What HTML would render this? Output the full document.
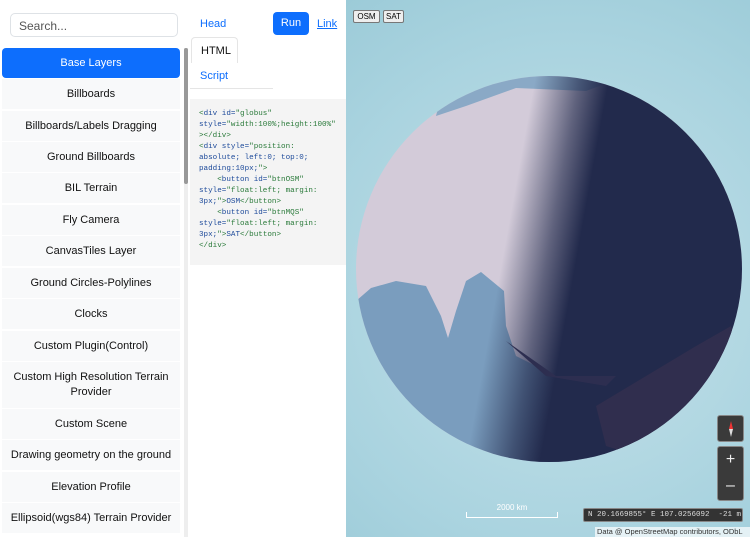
<!DOCTYPE html>
<html><head><meta charset="utf-8"><style>
*{box-sizing:border-box;margin:0;padding:0}
body{width:750px;height:537px;overflow:hidden;font-family:"Liberation Sans","DejaVu Sans",sans-serif;background:#fff;position:relative}
#left{position:absolute;left:0;top:0;width:188px;height:537px;background:#fff}
#search{position:absolute;left:10px;top:13px;width:168px;height:24px;border:1px solid #dee2e6;border-radius:5px;font-size:12px;color:#555;padding:5px 8px}
.item{position:absolute;left:2px;width:178px;height:30px;background:#f8f9fa;font-size:11px;color:#111;text-align:center;display:flex;align-items:center;justify-content:center;line-height:15px;padding:0 6px}
.item.act{background:#0d6efd;color:#fff;border-radius:4px}
#sb{position:absolute;left:184px;top:48px;width:4px;height:489px;background:#eee}
#sbt{position:absolute;left:184px;top:48px;width:4px;height:136px;background:#999;border-radius:2px}
#mid{position:absolute;left:190px;top:0;width:156px;height:537px;background:#fff}
a{color:#0d6efd;font-size:11px}
#code{position:absolute;left:190px;top:99px;width:156px;height:166px;background:#f4f4f4;font-family:"Liberation Mono",monospace;font-size:7.6px;line-height:11px;padding:10px 0 0 9px;color:#1d4a9a;white-space:pre}
.g{color:#2a7a3a}
#map{position:absolute;left:346px;top:0;width:404px;height:537px;background:radial-gradient(circle at 55% 55%,#c6e2ea,#a9d3df 70%,#9ccbd8)}
.btn{position:absolute;background:#3a3a3a;border:1px solid #888;border-radius:3px}
</style></head><body>
<div id="left">
<div id="search">Search...</div>
<div class="item act" style="top:48px">Base Layers</div>
<div class="item" style="top:79px">Billboards</div>
<div class="item" style="top:111px">Billboards/Labels Dragging</div>
<div class="item" style="top:142px">Ground Billboards</div>
<div class="item" style="top:173px">BIL Terrain</div>
<div class="item" style="top:205px">Fly Camera</div>
<div class="item" style="top:236px">CanvasTiles Layer</div>
<div class="item" style="top:268px">Ground Circles-Polylines</div>
<div class="item" style="top:299px">Clocks</div>
<div class="item" style="top:331px">Custom Plugin(Control)</div>
<div class="item" style="top:362px;height:46px">Custom High Resolution Terrain Provider</div>
<div class="item" style="top:409px">Custom Scene</div>
<div class="item" style="top:440px">Drawing geometry on the ground</div>
<div class="item" style="top:472px">Elevation Profile</div>
<div class="item" style="top:503px">Ellipsoid(wgs84) Terrain Provider</div>
</div>
<div id="sb"></div><div id="sbt"></div>
<div id="mid">
<a style="position:absolute;left:10px;top:18px;text-decoration:none">Head</a>
<div style="position:absolute;left:83px;top:12px;width:36px;height:23px;background:#0d6efd;border-radius:4px;color:#fff;font-size:11px;text-align:center;line-height:23px">Run</div>
<a style="position:absolute;left:127px;top:18px;text-decoration:underline">Link</a>
<div style="position:absolute;left:1px;top:37px;width:47px;height:26px;border:1px solid #e5e5e5;border-bottom:none;border-radius:4px 4px 0 0;font-size:11px;color:#111;padding:7px 0 0 9px">HTML</div>
<a style="position:absolute;left:10px;top:70px;text-decoration:none">Script</a>
<div style="position:absolute;left:0;top:88px;width:83px;height:1px;background:#e5e5e5"></div>
</div>
<div id="code"><span class="g">&lt;</span>div id=<span class="g">"globus"</span>
style=<span class="g">"width:100%;height:100%"</span>
<span class="g">&gt;&lt;/div&gt;</span>
<span class="g">&lt;</span>div style=<span class="g">"position:</span>
absolute; left:0; top:0;
padding:10px;<span class="g">"&gt;</span>
    <span class="g">&lt;</span>button id=<span class="g">"btnOSM"</span>
style=<span class="g">"float:left; margin:</span>
3px;<span class="g">"&gt;</span>OSM<span class="g">&lt;/button&gt;</span>
    <span class="g">&lt;</span>button id=<span class="g">"btnMQS"</span>
style=<span class="g">"float:left; margin:</span>
3px;<span class="g">"&gt;</span>SAT<span class="g">&lt;/button&gt;</span>
<span class="g">&lt;/div&gt;</span></div>
<div id="map">
<div style="position:absolute;left:7px;top:10px;width:27px;height:13px;background:#eee;border:1px solid #777;border-radius:2px;font-size:8px;text-align:center;line-height:11px">OSM</div>
<div style="position:absolute;left:37px;top:10px;width:21px;height:13px;background:#eee;border:1px solid #777;border-radius:2px;font-size:8px;text-align:center;line-height:11px">SAT</div>
<svg style="position:absolute;left:10px;top:76px" width="386" height="386" viewBox="0 0 386 386">
<defs>
<clipPath id="c"><circle cx="193" cy="193" r="193"/></clipPath>
<linearGradient id="t" gradientUnits="userSpaceOnUse" x1="146" y1="185" x2="218" y2="198">
<stop offset="0" stop-color="#222a4c" stop-opacity="0"/>
<stop offset="0.6" stop-color="#222a4c" stop-opacity="0.65"/>
<stop offset="1" stop-color="#222a4c" stop-opacity="1"/>
</linearGradient>
</defs>
<g clip-path="url(#c)">
<rect width="386" height="386" fill="#d3cbd9"/>
<path d="M0 225 L15 212 L40 205 L70 210 L85 240 L92 262 L100 235 L110 205 L125 196 L148 215 L150 250 L160 280 L200 300 L230 330 L260 386 L0 386 Z" fill="#7a9dbe"/>
<path d="M90 0 L270 0 L230 15 L160 12 L110 30 L80 40 Z" fill="#8aa9c6"/>
<rect width="386" height="386" fill="url(#t)"/>
<path d="M240 330 L290 300 L340 270 L375 250 L386 300 L360 360 L300 386 L250 370 Z" fill="#302e4e"/>
<path d="M150 265 L200 300 L260 300 L250 310 L190 300 Z" fill="#2d2e50"/>
</g>
</svg>
<div style="position:absolute;left:120px;top:512px;width:92px;height:6px;border:1px solid #fff;border-top:none"></div>
<div style="position:absolute;left:120px;top:503px;width:92px;text-align:center;font-size:8px;color:#fff">2000 km</div>
<div class="btn" style="left:371px;top:415px;width:27px;height:27px"><div style="position:absolute;left:11px;top:5px;width:0;height:0;border-left:2.5px solid transparent;border-right:2.5px solid transparent;border-bottom:8px solid #e33"></div><div style="position:absolute;left:11px;top:13px;width:0;height:0;border-left:2.5px solid transparent;border-right:2.5px solid transparent;border-top:8px solid #ddd"></div></div>
<div class="btn" style="left:371px;top:446px;width:27px;height:55px;color:#eee;font-size:16px;text-align:center;line-height:26px">+<br>–</div>
<div style="position:absolute;left:237px;top:508px;width:160px;height:14px;background:#333;border:1px solid #888;border-radius:2px;font-family:'Liberation Mono',monospace;font-size:7.5px;color:#ddd;line-height:12px;padding-left:4px;white-space:pre;overflow:hidden">N 20.1669855° E 107.0256092  -21 m</div>
<div style="position:absolute;left:249px;top:527px;width:160px;height:10px;background:rgba(255,255,255,.7);font-size:7.5px;color:#333;line-height:10px;white-space:nowrap;padding-left:2px">Data @ OpenStreetMap contributors, ODbL</div>
</div>
</body></html>
